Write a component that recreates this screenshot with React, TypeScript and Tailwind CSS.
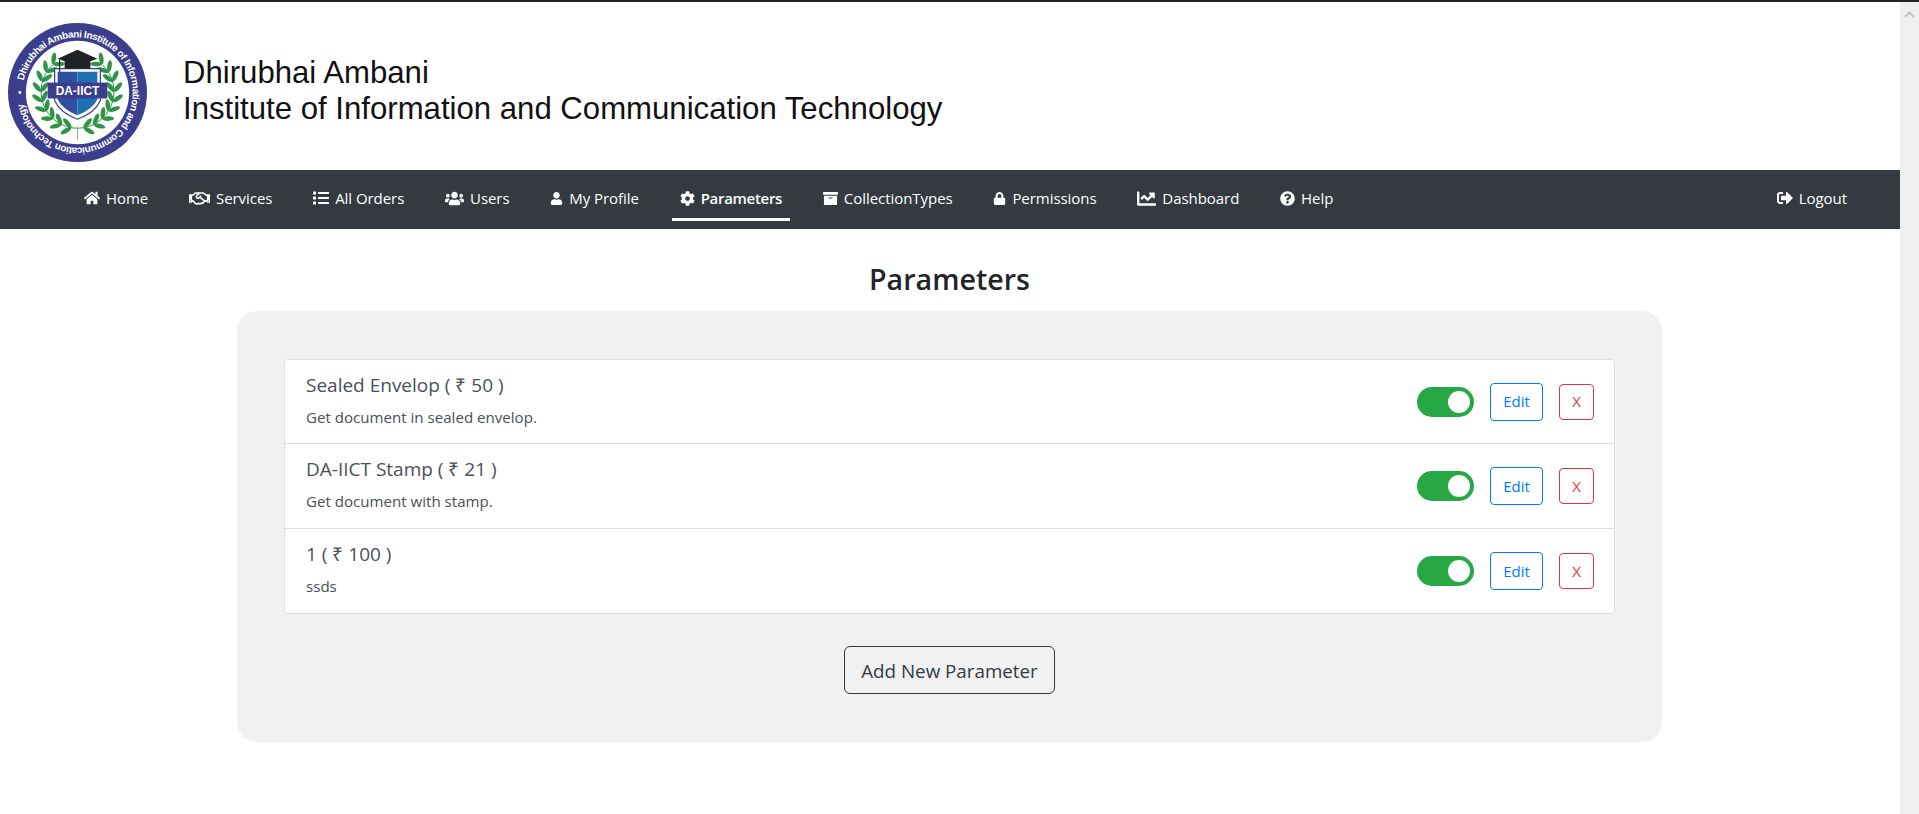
import type { ReactNode } from "react";
import {
  FaArchive,
  FaChartLine,
  FaCog,
  FaHome,
  FaList,
  FaLock,
  FaQuestionCircle,
  FaRegHandshake,
  FaSignOutAlt,
  FaUser,
  FaUsers,
} from "react-icons/fa";

type NavItem = {
  label: string;
  icon: ReactNode;
  active?: boolean;
};

const navItems: NavItem[] = [
  { label: "Home", icon: <FaHome size={16} /> },
  { label: "Services", icon: <FaRegHandshake size={21} /> },
  { label: "All Orders", icon: <FaList size={16} /> },
  { label: "Users", icon: <FaUsers size={19} /> },
  { label: "My Profile", icon: <FaUser size={13} /> },
  { label: "Parameters", icon: <FaCog size={15} />, active: true },
  { label: "CollectionTypes", icon: <FaArchive size={15} /> },
  { label: "Permissions", icon: <FaLock size={13} /> },
  { label: "Dashboard", icon: <FaChartLine size={19} /> },
  { label: "Help", icon: <FaQuestionCircle size={15} /> },
];

const parameters = [
  { name: "Sealed Envelop ( ₹ 50 )", note: "Get document in sealed envelop." },
  { name: "DA-IICT Stamp ( ₹ 21 )", note: "Get document with stamp." },
  { name: "1 ( ₹ 100 )", note: "ssds" },
];

const leafAngles = [100, 116, 132, 148, 164, 180, 196, 212, 228];

function LaurelBranch() {
  return (
    <g>
      <path d="M70 106 A 37 37 0 0 1 45 42" fill="none" stroke="#2f9447" strokeWidth="1" />
      {leafAngles.map((angle) => {
        const rad = (angle * Math.PI) / 180;
        const x = 70 + 37 * Math.cos(rad);
        const y = 69 + 37 * Math.sin(rad);
        return (
          <g key={angle} transform={`translate(${x} ${y})`}>
            <ellipse cx="6" cy="0" rx="6" ry="2.3" fill="#2f9447" transform={`rotate(${angle + 50})`} />
            <ellipse cx="6" cy="0" rx="6" ry="2.3" fill="#2f9447" transform={`rotate(${angle + 130})`} />
          </g>
        );
      })}
    </g>
  );
}

function Logo() {
  return (
    <svg viewBox="0 0 140 140" className="h-[139px] w-[139px] shrink-0">
      <defs>
        <path id="ring" d="M 14.5 70 A 55.5 55.5 0 1 1 125.5 70 A 55.5 55.5 0 1 1 14.5 70" />
      </defs>
      <circle cx="70" cy="70" r="70" fill="#3a3e8c" />
      <circle cx="70" cy="70" r="52" fill="#ffffff" />
      <text fill="#ffffff" fontSize="10" fontWeight="700" fontFamily="Liberation Sans, sans-serif">
        <textPath href="#ring" startOffset="12" textLength="325">
          Dhirubhai Ambani Institute of Information and Communication Technology
        </textPath>
      </text>
      <circle cx="12" cy="70" r="1.5" fill="#ffffff" />
      <LaurelBranch />
      <g transform="translate(140 0) scale(-1 1)">
        <LaurelBranch />
      </g>
      <path d="M70 104 V 118" stroke="#8a968e" strokeWidth="0.8" />
      <path d="M47 46 H93 V78 Q 88 90 70 97 Q 52 90 47 78 Z" fill="#ffffff" stroke="#3a3e8c" strokeWidth="1.2" />
      <path d="M50 49 H70 V93 Q 55 87 50 77 Z" fill="#2f4f9f" />
      <path d="M70 49 H90 V77 Q 85 87 70 93 Z" fill="#1f6fb5" />
      <rect x="40" y="60" width="60" height="16" fill="#3a3e8c" />
      <text x="70" y="72.5" textAnchor="middle" fill="#ffffff" fontSize="12" fontWeight="700" fontFamily="Liberation Sans, sans-serif">
        DA-IICT
      </text>
      <path d="M57 36 V 46 H 83 V 36 Z" fill="#1f2326" />
      <path d="M70 27 L 90 36 L 70 43 L 50 36 Z" fill="#1f2326" />
      <path d="M52 37 V 49" stroke="#1f2326" strokeWidth="1.2" />
    </svg>
  );
}

function NavLink({ label, icon, active }: NavItem) {
  return (
    <a
      className={`flex h-[42px] items-center gap-[6px] border-b-[3px] px-2 text-white ${
        active ? "border-white font-semibold tracking-[-0.3px]" : "border-transparent tracking-[-0.05px]"
      }`}
    >
      {icon}
      <span>{label}</span>
    </a>
  );
}

function Toggle() {
  return (
    <span className="flex h-[30px] w-[57px] items-center justify-end rounded-full bg-[#28a745] pr-1">
      <span className="h-[22px] w-[22px] rounded-full bg-white" />
    </span>
  );
}

function ParameterRow({ name, note }: { name: string; note: string }) {
  return (
    <li className="flex h-[84.33px] items-center justify-between border-b border-[#dfdfdf] pr-5 pl-[21px] text-[#495057] last:border-b-0">
      <div className="mb-[5px]">
        <h3 className="text-[19px] leading-[26px]">{name}</h3>
        <p className="mt-[9px] text-[15.1px] leading-5">{note}</p>
      </div>
      <div className="flex items-center">
        <Toggle />
        <button className="ml-4 h-[38px] w-[53px] rounded border border-[#007bff] text-[15px] text-[#007bff]">Edit</button>
        <button className="ml-4 h-9 w-[35px] rounded border border-[#dc3545] text-[15px] text-[#dc3545]">X</button>
      </div>
    </li>
  );
}

export default function App() {
  return (
    <div className="flex h-[814px] w-[1919px] flex-col overflow-hidden border-t-2 border-[#222222] bg-white font-['Open_Sans',sans-serif] text-[#212529]">
      <div className="flex min-h-0 flex-1">
        <div className="w-[1900px]">
          <header className="flex h-[168px] items-center pt-3 pl-2">
            <Logo />
            <div className="mb-[2px] ml-[36px] font-['Liberation_Sans',sans-serif] text-[31.15px] leading-9 text-[#111111]">
              <div>Dhirubhai Ambani</div>
              <div>Institute of Information and Communication Technology</div>
            </div>
          </header>

          <nav className="flex h-[59px] items-center justify-between bg-[#343a40] pr-[45px] pl-[76px] text-[15px]">
            <div className="flex items-center gap-[24.75px]">
              {navItems.map((item) => (
                <NavLink key={item.label} {...item} />
              ))}
            </div>
            <NavLink label="Logout" icon={<FaSignOutAlt size={16} />} />
          </nav>

          <main className="flex flex-col items-center pr-px">
            <h1 className="mt-[29px] text-[28.6px] leading-[42px] font-semibold">Parameters</h1>
            <section className="mt-[11px] flex h-[431px] w-[1425px] flex-col items-center rounded-[20px] bg-[#f1f1f1] px-[47px] pt-[48px]">
              <ul className="w-full rounded border border-[#dfdfdf] bg-white">
                {parameters.map((item) => (
                  <ParameterRow key={item.name} {...item} />
                ))}
              </ul>
              <button className="mt-8 h-12 w-[211px] rounded-md border border-[#343a40] pt-[2px] text-[18.8px] text-[#343a40]">
                Add New Parameter
              </button>
            </section>
          </main>
        </div>

        <div className="flex w-[19px] justify-center bg-[#efefef] pt-[9px]">
          <svg width="11" height="7" viewBox="0 0 11 7">
            <path d="M1 6 L5.5 1.5 L10 6" fill="none" stroke="#c4c4c4" strokeWidth="2" />
          </svg>
        </div>
      </div>
    </div>
  );
}
